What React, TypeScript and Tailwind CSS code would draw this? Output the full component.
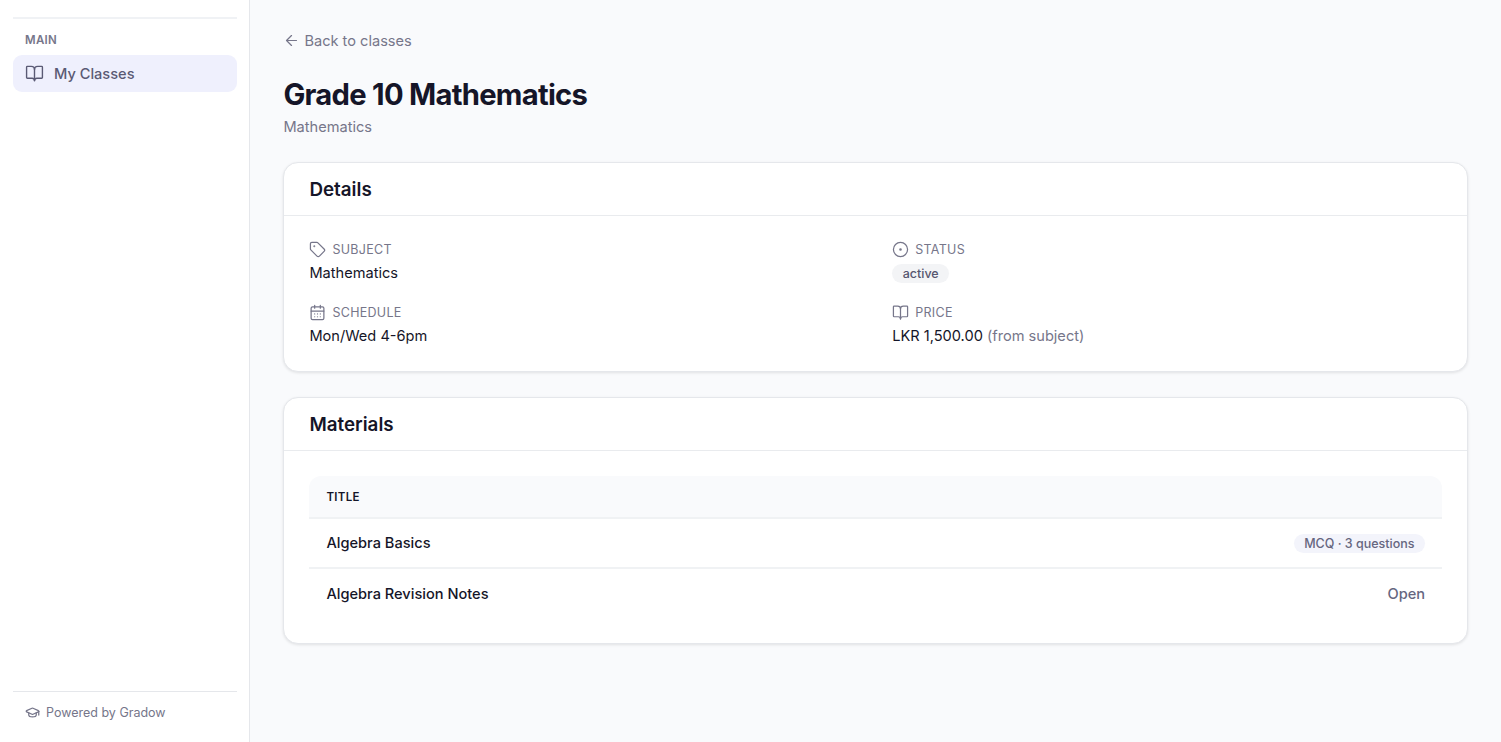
import type { ReactNode } from "react";
import { ArrowLeft, BookOpen, CalendarDays, CircleDot, GraduationCap, Tag } from "lucide-react";

type Material = {
  id: number;
  title: string;
  questions?: number;
};

const materials: Material[] = [
  { id: 1, title: "Algebra Basics", questions: 3 },
  { id: 2, title: "Algebra Revision Notes" },
];

function Sidebar() {
  return (
    <aside className="flex w-[250px] shrink-0 flex-col border-r border-[#e5e7eb] bg-white pr-3 pl-[13px]">
      <div className="h-[19px] shrink-0 border-b-2 border-[#f0f2f5]" />
      <div className="mt-[13px] px-3 text-[11.5px] leading-4 font-semibold tracking-[0.3px] text-[#76768a]">MAIN</div>
      <nav className="mt-[7px]">
        <a className="flex h-[37px] items-center gap-[10px] rounded-[9px] bg-[#eff0fd] px-3 text-[14.6px] font-medium text-[#5a5a74]">
          <BookOpen size={19} strokeWidth={1.75} />
          <span className="pt-[2px]">My Classes</span>
        </a>
      </nav>
      <div className="mt-auto flex h-[51px] items-start gap-1.5 border-t border-[#e5e7eb] px-3 pt-[13px] text-[12.5px] leading-4 text-[#76768a]">
        <GraduationCap size={15} strokeWidth={2} />
        Powered by Gradow
      </div>
    </aside>
  );
}

function Card({ title, className, children }: { title: string; className: string; children: ReactNode }) {
  return (
    <section className={`rounded-[15px] border border-[#e5e7eb] bg-white shadow-[0_1px_3px_rgba(0,0,0,0.1)] ${className}`}>
      <h2 className="h-[53px] border-b border-[#e9ebee] px-[25px] pt-[14px] text-[18.8px] leading-[26px] font-semibold text-[#151528]">
        {title}
      </h2>
      {children}
    </section>
  );
}

function Detail({ icon, label, children }: { icon: ReactNode; label: string; children: ReactNode }) {
  return (
    <div className="h-[42px]">
      <dt className="flex h-[17px] items-center gap-1.5 text-[12.5px] leading-[17px] tracking-[0.3px] text-[#76768a] uppercase">
        {icon}
        {label}
      </dt>
      <dd className="mt-[6px] flex h-5 items-center text-[14.6px] whitespace-pre text-[#151528]">{children}</dd>
    </div>
  );
}

export default function App() {
  return (
    <div className="flex h-[742px] overflow-hidden bg-[#f9fafc] font-['Inter',sans-serif]">
      <Sidebar />
      <main className="min-w-0 flex-1 pr-[33px] pl-[33.4px]">
        <a className="mt-[30px] flex h-[22px] items-center gap-1 text-[14.6px] leading-[20px] text-[#76768a]">
          <ArrowLeft size={17} strokeWidth={1.75} className="-mt-px" />
          <span>Back to classes</span>
        </a>
        <h1 className="mt-[24px] text-[29.2px] leading-[38px] font-bold tracking-[-0.73px] text-[#151528]">
          Grade 10 Mathematics
        </h1>
        <p className="mt-[2px] text-[14.6px] leading-[22px] text-[#76768a]">Mathematics</p>

        <Card title="Details" className="mt-[24px] h-[210px]">
          <dl className="grid grid-cols-2 gap-x-[33px] gap-y-[21px] px-[25px] pt-[25px]">
            <Detail icon={<Tag size={17} strokeWidth={1.75} />} label="Subject">
              Mathematics
            </Detail>
            <Detail icon={<CircleDot size={17} strokeWidth={1.75} />} label="Status">
              <span className="-mt-[2px] rounded-full bg-[#f3f4f6] px-[10.5px] text-[12.5px] leading-[19px] font-medium text-[#56566f]">
                active
              </span>
            </Detail>
            <Detail icon={<CalendarDays size={17} strokeWidth={1.75} />} label="Schedule">
              Mon/Wed 4-6pm
            </Detail>
            <Detail icon={<BookOpen size={17} strokeWidth={1.75} />} label="Price">
              LKR 1,500.00 <span className="text-[#76768a]">(from subject)</span>
            </Detail>
          </dl>
        </Card>

        <Card title="Materials" className="mt-[25px] h-[247px]">
          <div className="px-[25px] pt-[25px]">
            <table className="w-full border-separate border-spacing-0 text-[14.6px] text-[#151528]">
              <thead>
                <tr className="h-[43px]">
                  <th className="rounded-tl-[12px] border-b-2 border-[#f0f2f4] bg-[#f9fafc] px-[17px] pt-[2px] text-left text-[11.5px] font-semibold tracking-[0.3px] uppercase">
                    Title
                  </th>
                  <th className="rounded-tr-[12px] border-b-2 border-[#f0f2f4] bg-[#f9fafc]" />
                </tr>
              </thead>
              <tbody>
                {materials.map((m, i) => {
                  const border = i < materials.length - 1 ? "border-b-2 border-[#f0f2f4]" : "";
                  return (
                    <tr key={m.id} className="h-[50px]">
                      <td className={`px-[17px] pt-[2px] font-medium ${border}`}>{m.title}</td>
                      <td className={`px-[17px] pt-[2px] text-right font-medium text-[#66667f] ${border}`}>
                        {m.questions ? (
                          <span className="inline-block rounded-full bg-[#f3f4fb] px-[10.5px] text-[12.5px] leading-[19px]">
                            MCQ · {m.questions} questions
                          </span>
                        ) : (
                          <a>Open</a>
                        )}
                      </td>
                    </tr>
                  );
                })}
              </tbody>
            </table>
          </div>
        </Card>
      </main>
    </div>
  );
}
